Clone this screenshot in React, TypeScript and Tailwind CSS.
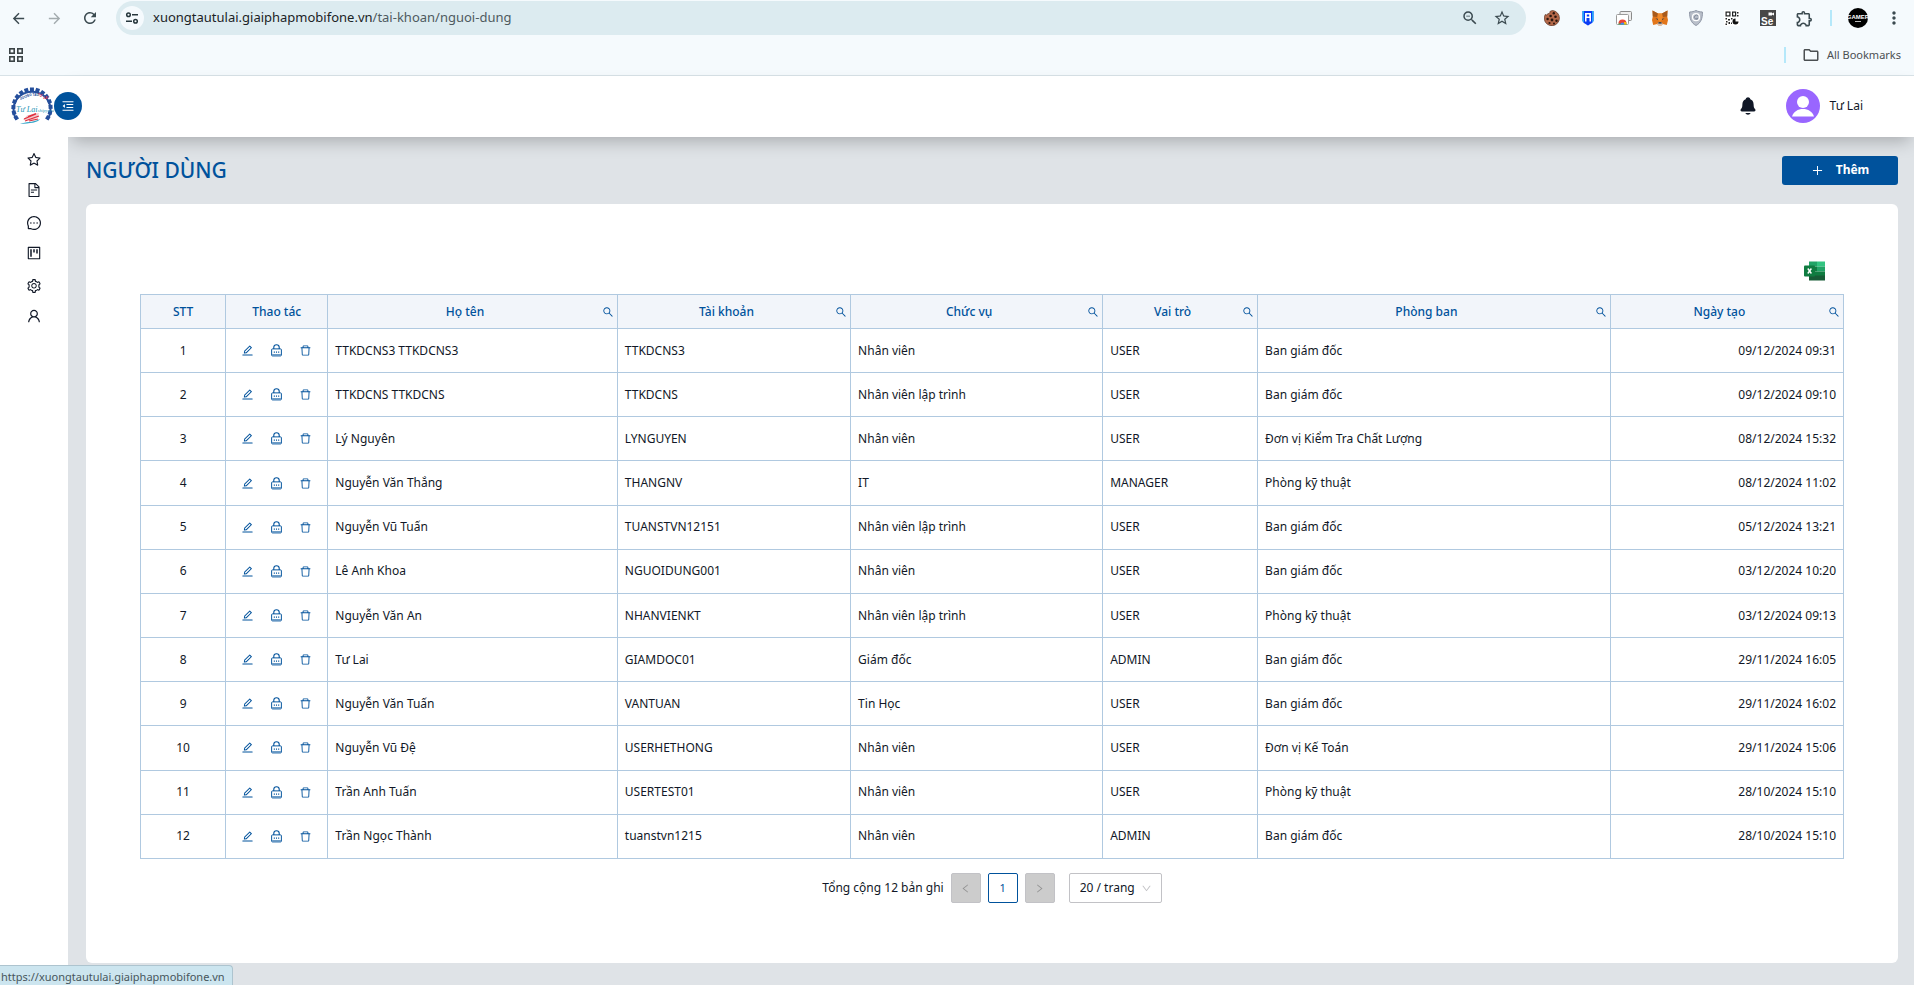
import type { ReactNode } from 'react';
import {
  AiOutlineStar, AiOutlineFileText, AiOutlineMessage, AiOutlineProject,
  AiOutlineSetting, AiOutlineUser, AiOutlineEdit, AiOutlineDelete,
  AiOutlineSearch, AiOutlinePlus, AiOutlineLeft, AiOutlineRight,
  AiOutlineDown, AiOutlineMenuFold,
} from 'react-icons/ai';
import {
  MdArrowBack, MdArrowForward, MdRefresh, MdStarOutline, MdZoomOut,
  MdOutlineExtension, MdMoreVert, MdOutlineFolder,
} from 'react-icons/md';
import { IoNotifications } from 'react-icons/io5';

interface UserRow {
  name: string;
  account: string;
  position: string;
  role: string;
  department: string;
  createdAt: string;
}

const users: UserRow[] = [
  { name: 'TTKDCNS3 TTKDCNS3', account: 'TTKDCNS3', position: 'Nhân viên', role: 'USER', department: 'Ban giám đốc', createdAt: '09/12/2024 09:31' },
  { name: 'TTKDCNS TTKDCNS', account: 'TTKDCNS', position: 'Nhân viên lập trình', role: 'USER', department: 'Ban giám đốc', createdAt: '09/12/2024 09:10' },
  { name: 'Lý Nguyên', account: 'LYNGUYEN', position: 'Nhân viên', role: 'USER', department: 'Đơn vị Kiểm Tra Chất Lượng', createdAt: '08/12/2024 15:32' },
  { name: 'Nguyễn Văn Thắng', account: 'THANGNV', position: 'IT', role: 'MANAGER', department: 'Phòng kỹ thuật', createdAt: '08/12/2024 11:02' },
  { name: 'Nguyễn Vũ Tuấn', account: 'TUANSTVN12151', position: 'Nhân viên lập trình', role: 'USER', department: 'Ban giám đốc', createdAt: '05/12/2024 13:21' },
  { name: 'Lê Anh Khoa', account: 'NGUOIDUNG001', position: 'Nhân viên', role: 'USER', department: 'Ban giám đốc', createdAt: '03/12/2024 10:20' },
  { name: 'Nguyễn Văn An', account: 'NHANVIENKT', position: 'Nhân viên lập trình', role: 'USER', department: 'Phòng kỹ thuật', createdAt: '03/12/2024 09:13' },
  { name: 'Tư Lai', account: 'GIAMDOC01', position: 'Giám đốc', role: 'ADMIN', department: 'Ban giám đốc', createdAt: '29/11/2024 16:05' },
  { name: 'Nguyễn Văn Tuấn', account: 'VANTUAN', position: 'Tin Học', role: 'USER', department: 'Ban giám đốc', createdAt: '29/11/2024 16:02' },
  { name: 'Nguyễn Vũ Đệ', account: 'USERHETHONG', position: 'Nhân viên', role: 'USER', department: 'Đơn vị Kế Toán', createdAt: '29/11/2024 15:06' },
  { name: 'Trần Anh Tuấn', account: 'USERTEST01', position: 'Nhân viên', role: 'USER', department: 'Phòng kỹ thuật', createdAt: '28/10/2024 15:10' },
  { name: 'Trần Ngọc Thành', account: 'tuanstvn1215', position: 'Nhân viên', role: 'ADMIN', department: 'Ban giám đốc', createdAt: '28/10/2024 15:10' },
];

const columns = [
  { title: 'STT', width: 'w-[5%]', search: false },
  { title: 'Thao tác', width: 'w-[6%]', search: false },
  { title: 'Họ tên', width: 'w-[17%]', search: true },
  { title: 'Tài khoản', width: 'w-[13.7%]', search: true },
  { title: 'Chức vụ', width: 'w-[14.8%]', search: true },
  { title: 'Vai trò', width: 'w-[9.1%]', search: true },
  { title: 'Phòng ban', width: 'w-[20.7%]', search: true },
  { title: 'Ngày tạo', width: 'w-[13.7%]', search: true },
];

const menu = [
  { label: 'Yêu thích', icon: AiOutlineStar },
  { label: 'Tài liệu', icon: AiOutlineFileText },
  { label: 'Tin nhắn', icon: AiOutlineMessage },
  { label: 'Dự án', icon: AiOutlineProject },
  { label: 'Cài đặt', icon: AiOutlineSetting },
  { label: 'Tài khoản', icon: AiOutlineUser },
];

/* Browser toolbar icons */

function SiteInfoIcon() {
  return (
    <svg width="14" height="14" viewBox="0 0 14 14" fill="none" stroke="#26363c" strokeWidth="1.5">
      <circle cx="3.5" cy="3.8" r="1.8" />
      <path d="M7 3.8h6M1 10.2h6" />
      <circle cx="10.5" cy="10.2" r="1.8" />
    </svg>
  );
}

function CookieIcon() {
  return (
    <svg width="16" height="16" viewBox="0 0 16 16">
      <path d="M8.5 0.5a7.6 7.6 0 1 1-8.2 8.7 7 7 0 0 1 1-4.7c1 .8 2.3.5 2.6-.9 1.3.3 2.3-.6 2-2a6 6 0 0 1 2.6-1.1z" fill="#b5694a" stroke="#59301f" strokeWidth=".7" />
      <g fill="#2a1710">
        <circle cx="9.8" cy="3.2" r="1.2" />
        <circle cx="6.6" cy="6" r="1.3" />
        <circle cx="11.5" cy="6.8" r="1.3" />
        <circle cx="3.6" cy="9" r="1.2" />
        <circle cx="8" cy="10" r="1.4" />
        <circle cx="12.5" cy="10.8" r="1.2" />
        <circle cx="5.5" cy="13" r="1.1" />
        <circle cx="10" cy="13.5" r="1" />
      </g>
    </svg>
  );
}

function ShieldBlueIcon() {
  return (
    <svg width="12" height="16" viewBox="0 0 12 16">
      <path d="M.5 1h11v9.5c0 2-3 3.5-5.5 5-2.5-1.5-5.5-3-5.5-5z" fill="#0b3cf5" />
      <path d="M.5 1H2v11.5C1 12 .5 11.3.5 10.5zM10 1h1.5v9.5c0 .8-.5 1.5-1.5 2z" fill="#22a8f7" />
      <path d="M3 11.5V3h6v8.5H7.500V8h-3v3.500zM4.800 4.500v2h2.400v-2z" fill="#fff" />
    </svg>
  );
}

function ChromeWindowsIcon() {
  return (
    <svg width="16" height="14" viewBox="0 0 16 14">
      <rect x="4" y=".5" width="11.5" height="9" rx="1" fill="#eee" stroke="#8a8a8a" />
      <rect x=".5" y="3.5" width="12" height="10" rx="1" fill="#fff" stroke="#9a9a9a" />
      <path d="M2.5 13.5a4 4 0 0 1 8 0z" fill="#34a853" />
      <path d="M2.5 12.5a4 4 0 0 1 8 0h-4z" fill="#ea4335" />
      <path d="M7.5 13.5l.5-2.500h2l.5 2.500z" fill="#fbbc05" />
      <path d="M4.5 13.5a2 2 0 0 1 4 0z" fill="#4285f4" />
    </svg>
  );
}

function FoxIcon() {
  return (
    <svg width="16" height="16" viewBox="0 0 16 16">
      <path d="M.5.5L6 3.5h4L15.5.5l-.3 6L16 10l-1.2 5-4-1-1.3 1.5h-3L5.2 14l-4 1L0 10l.8-3.5z" fill="#e2761b" />
      <path d="M.5.5L6 3.5 5 7 .8 6.5zM15.5.5L10 3.5l1 3.5 4.200-.5z" fill="#a85a1c" />
      <path d="M6 3.5h4l.6 5.5L8 12 5.4 9z" fill="#f08a2b" />
      <path d="M3.5 8.5l2.3.3.2 1.200zM12.5 8.5l-2.3.3-.2 1.200z" fill="#233447" />
      <path d="M5.2 14l1.3-2h3l1.3 2-1.300 1.500h-3z" fill="#d7c1b3" />
      <path d="M6.5 12.3h3l.2 1.2H6.3z" fill="#1b1b1b" />
    </svg>
  );
}

function ShieldGreyIcon() {
  return (
    <svg width="14" height="16" viewBox="0 0 14 16">
      <path d="M7 .5c2 1 4 1.4 6.4 1.5.2 6-1.4 11-6.4 13.5C2 13 .4 8 .6 2 3 1.9 5 1.5 7 .5z" fill="#b9bfca" stroke="#8f96a5" />
      <circle cx="7" cy="7.2" r="3.5" fill="none" stroke="#fff" strokeWidth="1.2" />
      <path d="M9 6a2 2 0 1 0 0 2.4H7.2" fill="none" stroke="#848c9c" />
    </svg>
  );
}

function QrIcon() {
  return (
    <svg width="16" height="16" viewBox="0 0 16 16">
      <rect width="16" height="16" rx="1" fill="#fff" />
      <g fill="none" stroke="#222" strokeWidth="1.2">
        <rect x="2.1" y="2.1" width="3.8" height="3.8" />
        <rect x="8.6" y="2.1" width="3" height="3.8" />
      </g>
      <path d="M13 2h1.5v1.5H13zM13 5h1.5v1.5H13zM1.5 8H3v1.5H1.5zM4 9h2v1.5H4zM7 8h1.5v1.5H7zM2 11h1.5v1.5H2zM4.5 12H6v2H4.5zM1.5 13.5H3V15H1.5zM7 12.5h1V14H7z" fill="#222" />
      <path d="M11.5 8.5v3h3a3 3 0 1 1-3-3z" fill="#111" />
    </svg>
  );
}

function SeleniumIcon() {
  return (
    <svg width="16" height="16" viewBox="0 0 16 16">
      <rect width="16" height="16" fill="#474747" />
      <path d="M8.5 2.5H12v1l2-1v3l-2-1v1H8.5z" fill="#fff" />
      <text x="1" y="14.5" fontSize="10" fontWeight="700" fill="#fff" fontFamily="Liberation Sans, sans-serif">Se</text>
    </svg>
  );
}

function ProfileIcon() {
  return (
    <svg width="20" height="20" viewBox="0 0 20 20">
      <circle cx="10" cy="10" r="10" fill="#000" />
      <text x="10" y="11" fontSize="6" fontWeight="700" textAnchor="middle" fill="#fff" fontFamily="Liberation Sans, sans-serif">GAMER</text>
      <path d="M7 13.5h6" stroke="#bbb" />
    </svg>
  );
}

function AppsIcon() {
  return (
    <svg width="14" height="14" viewBox="0 0 14 14" fill="none" stroke="#3c4446" strokeWidth="1.6">
      <rect x=".8" y=".8" width="4.4" height="4.4" />
      <rect x="8.8" y=".8" width="4.4" height="4.4" />
      <rect x=".8" y="8.8" width="4.4" height="4.4" />
      <rect x="8.8" y="8.8" width="4.4" height="4.4" />
    </svg>
  );
}

/* Application icons */

function Logo() {
  const teeth = Array.from({ length: 15 }, (_, i) => -122 + i * 17.4);
  return (
    <svg width="44" height="38" viewBox="0 0 44 38" className="shrink-0" role="img" aria-label="Tư Lai Shipyard">
      {teeth.map(a => (
        <rect key={a} x="20" y=".4" width="4" height="4" fill="#254f9c" transform={`rotate(${a} 22 21)`} />
      ))}
      <path d="M6.5 32.5A18.5 18 0 1 1 37.5 32.5" fill="none" stroke="#254f9c" strokeWidth="2" />
      <text x="10" y="13" dy="0 -1 -1 -1 -1" fontSize="3" fontWeight="700" fill="#254f9c" fontFamily="Liberation Sans, sans-serif">
        XƯỞNG TÀU
      </text>
      <text x="28" y="9" dy="0 1 1 1" fontSize="3" fontWeight="700" fill="#e0344a" fontFamily="Liberation Sans, sans-serif">
        TƯ LAI
      </text>
      <text x="6" y="25" fontSize="8" fontStyle="italic" fill="#2695b5" fontFamily="Liberation Serif, serif">
        Tư Lai<tspan fontSize="5">shipyard</tspan>
      </text>
      <path d="M13 33l4-4.5 8-2 4-.5-1 3 1 1-6 3z" fill="#f4c9cc" />
      <path d="M14 32l12-5M15 34l14-5M18 29.5l8-3M19 34l9-2" stroke="#df2f3e" strokeWidth="1.2" fill="none" />
      <path d="M10 37c6-2.5 12-1 20-5-2 3.5-10 4.5-20 5z" fill="#35a4c8" />
    </svg>
  );
}

function LockIcon() {
  return (
    <svg width="13" height="13" viewBox="0 0 12 12" fill="none" stroke="currentColor">
      <path d="M3.5 4.5V3a2.5 2.3 0 0 1 5 0v1.5" />
      <rect x="1.5" y="4.5" width="9" height="6.5" rx=".8" strokeWidth=".9" />
      <path d="M3.5 7.5h1M5.5 7.5h1M7.5 7.5h1" strokeWidth="1.1" />
      <path d="M2 9.8h8" strokeWidth=".6" />
    </svg>
  );
}

function ExcelIcon() {
  return (
    <svg width="22" height="20" viewBox="0 0 22 20">
      <rect x="5" y=".5" width="8" height="5" fill="#21a366" />
      <rect x="13" y=".5" width="8" height="5" fill="#33c481" />
      <rect x="5" y="5.5" width="8" height="5" fill="#107c41" />
      <rect x="13" y="5.5" width="8" height="5" fill="#21a366" />
      <rect x="5" y="10.5" width="16" height="4.5" fill="#107c41" />
      <rect x="5" y="14.5" width="16" height="5" fill="#185c37" />
      <rect x="0" y="4.5" width="11" height="11" rx="1" fill="#107c41" />
      <path d="M3.8 7.5l3.6 5M7.4 7.5l-3.6 5" stroke="#fff" strokeWidth="1.4" />
    </svg>
  );
}

function AvatarIcon() {
  return (
    <svg width="34" height="34" viewBox="0 0 34 34">
      <circle cx="17" cy="17" r="17" fill="#9966ff" />
      <circle cx="17" cy="13" r="6" fill="#fff" />
      <path d="M6 27.5c1.5-5 6-7.5 11-7.5s9.5 2.5 11 7.5z" fill="#fff" />
    </svg>
  );
}

function ToolButton({ label, children }: { label: string; children: ReactNode }) {
  return (
    <button type="button" aria-label={label} className="flex h-9 w-9 items-center justify-center">
      {children}
    </button>
  );
}

function BrowserBar() {
  return (
    <div className="border-b border-[#d8e2e7] bg-[#f5fafd] text-[#3b4a50]">
      <div className="flex h-9 items-center">
        <ToolButton label="Back"><MdArrowBack size={17} /></ToolButton>
        <ToolButton label="Forward"><MdArrowForward size={17} className="text-[#a3abae]" /></ToolButton>
        <ToolButton label="Reload"><MdRefresh size={18} /></ToolButton>
        <div className="ml-2 flex h-[34px] flex-1 items-center rounded-full bg-[#dcebf0] pl-1">
          <button type="button" aria-label="Site information" className="flex h-6 w-6 items-center justify-center rounded-full bg-[#f5fafd]">
            <SiteInfoIcon />
          </button>
          <p className="ml-[9px] flex-1 text-[13px] text-[#4e5a5f]">
            <span className="text-[#1b2326]">xuongtautulai.giaiphapmobifone.vn</span>/tai-khoan/nguoi-dung
          </p>
          <button type="button" aria-label="Zoom" className="flex w-8 justify-center"><MdZoomOut size={18} /></button>
          <button type="button" aria-label="Bookmark" className="mr-2 flex w-8 justify-center"><MdStarOutline size={18} /></button>
        </div>
        <div className="ml-2 flex items-center">
          <ToolButton label="Cookies"><CookieIcon /></ToolButton>
          <ToolButton label="Shield"><ShieldBlueIcon /></ToolButton>
          <ToolButton label="Windows"><ChromeWindowsIcon /></ToolButton>
          <ToolButton label="Wallet"><FoxIcon /></ToolButton>
          <ToolButton label="Guard"><ShieldGreyIcon /></ToolButton>
          <ToolButton label="QR code"><QrIcon /></ToolButton>
          <ToolButton label="Selenium"><SeleniumIcon /></ToolButton>
          <ToolButton label="Extensions"><MdOutlineExtension size={19} /></ToolButton>
          <span className="mx-2 h-4 w-0.5 bg-[#b5e8fa]" />
          <ToolButton label="Profile"><ProfileIcon /></ToolButton>
          <ToolButton label="Menu"><MdMoreVert size={20} /></ToolButton>
          <span className="w-0.5" />
        </div>
      </div>
      <div className="flex h-[39px] items-center justify-between pr-[13px] pb-px pl-[9px] text-[11px] text-[#4b4f52]">
        <button type="button" aria-label="Apps"><AppsIcon /></button>
        <div className="flex items-center">
          <span className="mr-4 h-4 w-0.5 bg-[#b5e8fa]" />
          <button type="button" className="flex items-center gap-[7px]">
            <MdOutlineFolder size={18} />
            All Bookmarks
          </button>
        </div>
      </div>
    </div>
  );
}

function Header() {
  return (
    <header className="flex h-[61px]">
      <div className="z-20 flex w-[68px] shrink-0 items-center bg-white pb-px pl-[10px]">
        <Logo />
        <button type="button" aria-label="Thu gọn menu" className="flex h-7 w-7 shrink-0 items-center justify-center rounded-full bg-[#00529c] text-white">
          <AiOutlineMenuFold size={14} />
        </button>
      </div>
      <div className="z-10 flex flex-1 items-center justify-end bg-white pr-[51px] pb-px shadow-[0_8px_16px_-4px_rgba(0,0,0,0.25)]">
        <button type="button" aria-label="Thông báo" className="mr-7 text-[#111827]">
          <IoNotifications size={20} />
        </button>
        <button type="button" className="flex items-center gap-[10px]">
          <AvatarIcon />
          Tư Lai
        </button>
      </div>
    </header>
  );
}

function Sidebar() {
  return (
    <aside className="z-20 w-[68px] shrink-0 bg-white pt-2">
      <ul>
        {menu.map(({ label, icon: Icon }) => (
          <li key={label} className="h-[30px] even:mb-[3px]">
            <a href="#" aria-label={label} className="flex h-full items-center justify-center">
              <Icon size={16} />
            </a>
          </li>
        ))}
      </ul>
    </aside>
  );
}

function UserTable() {
  return (
    <table className="h-[565px] w-full table-fixed border-collapse">
      <thead>
        <tr className="h-[34px] bg-[#f2f5fa] text-[#00529c]">
          {columns.map(c => (
            <th key={c.title} className={`${c.width} border border-[#b0c9e0] font-medium`}>
              <div className="flex items-center">
                <span className="flex-1 text-center">{c.title}</span>
                {c.search && (
                  <button type="button" aria-label={`Tìm ${c.title}`} className="mr-[3px]">
                    <AiOutlineSearch size={12} />
                  </button>
                )}
              </div>
            </th>
          ))}
        </tr>
      </thead>
      <tbody>
        {users.map((u, i) => (
          <tr key={u.account} className="h-11">
            <td className="border border-[#b0c9e0] text-center">{i + 1}</td>
            <td className="border border-[#b0c9e0]">
              <div className="flex justify-center gap-4 text-[#00529c]">
                <button type="button" aria-label="Sửa"><AiOutlineEdit size={13} /></button>
                <button type="button" aria-label="Khóa"><LockIcon /></button>
                <button type="button" aria-label="Xóa"><AiOutlineDelete size={13} /></button>
              </div>
            </td>
            <td className="border border-[#b0c9e0] px-[7px]">{u.name}</td>
            <td className="border border-[#b0c9e0] px-[7px]">{u.account}</td>
            <td className="border border-[#b0c9e0] px-[7px]">{u.position}</td>
            <td className="border border-[#b0c9e0] px-[7px]">{u.role}</td>
            <td className="border border-[#b0c9e0] px-[7px]">{u.department}</td>
            <td className="border border-[#b0c9e0] px-[7px] text-right">{u.createdAt}</td>
          </tr>
        ))}
      </tbody>
    </table>
  );
}

function Pagination() {
  return (
    <nav aria-label="Phân trang" className="mt-[14px] flex items-center justify-center gap-[7px]">
      <span>Tổng cộng {users.length} bản ghi</span>
      <button type="button" disabled aria-label="Trang trước" className="flex h-[30px] w-[30px] items-center justify-center rounded-xs border border-[#c2c2c6] bg-[#cccccc] text-[#929292]">
        <AiOutlineLeft size={11} />
      </button>
      <button type="button" className="h-[30px] w-[30px] rounded-xs border border-[#00529c] text-[11px] text-[#00529c]">1</button>
      <button type="button" disabled aria-label="Trang sau" className="flex h-[30px] w-[30px] items-center justify-center rounded-xs border border-[#c2c2c6] bg-[#cccccc] text-[#929292]">
        <AiOutlineRight size={11} />
      </button>
      <div className="relative ml-[7px]">
        <select aria-label="Số bản ghi mỗi trang" className="h-[30px] w-[93px] appearance-none rounded-xs border border-[#c2c2c6] bg-white pl-[10px]">
          <option>20 / trang</option>
          <option>50 / trang</option>
        </select>
        <AiOutlineDown size={11} className="pointer-events-none absolute top-[10px] right-[10px] text-[#c2c2c6]" />
      </div>
    </nav>
  );
}

export default function App() {
  return (
    <div className="flex min-h-screen flex-col bg-[#dfe3e7] font-['Noto_Sans',sans-serif] text-xs text-[#111827]">
      <BrowserBar />
      <Header />
      <div className="flex flex-1">
        <Sidebar />
        <main className="flex min-w-0 flex-1 flex-col pt-[18px] pr-4 pb-[22px] pl-[18px]">
          <div className="flex items-center justify-between">
            <h1 className="text-[21px] leading-[30px] font-medium text-[#00529c]">NGƯỜI DÙNG</h1>
            <button type="button" className="flex h-[29px] w-[116px] items-center justify-center gap-3 rounded-[3px] bg-[#00529c] font-bold text-white">
              <AiOutlinePlus size={13} />
              Thêm
            </button>
          </div>
          <section className="mt-[19px] flex-1 rounded-md bg-white px-[54px] pt-[57px] pb-[60px]">
            <div className="mb-[13px] flex justify-end pr-[18px]">
              <button type="button" aria-label="Xuất Excel"><ExcelIcon /></button>
            </div>
            <UserTable />
            <Pagination />
          </section>
        </main>
      </div>
      <div className="fixed bottom-0 left-0 z-30 h-5 rounded-tr-sm border-t border-r border-[#adc4cf] bg-[#cce5ef] pr-[7px] pl-px text-[11px] leading-[21px] text-[#47565c]">
        https://xuongtautulai.giaiphapmobifone.vn
      </div>
    </div>
  );
}
